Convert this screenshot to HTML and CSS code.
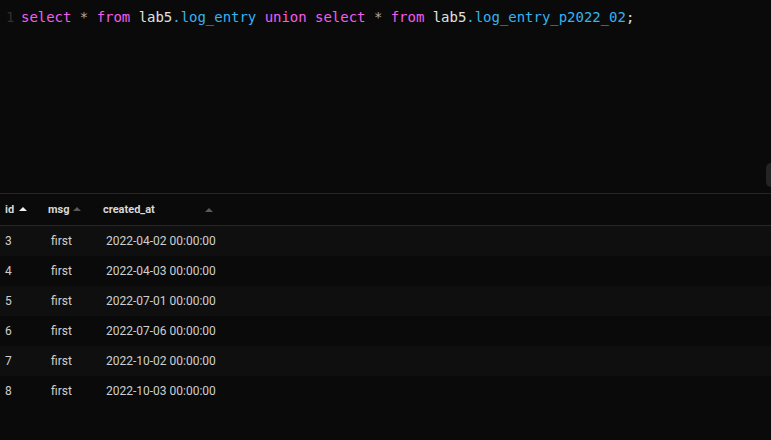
FILE: index.html
```html
<!DOCTYPE html>
<html>
<head>
<meta charset="utf-8">
<link rel="stylesheet" href="styles.css">
</head>
<body>
<div class="app">
  <div class="editor">
    <div class="line">
      <span class="ln">1</span>
      <span class="code"><span class="kw">select</span> <span class="op">*</span> <span class="kw">from</span> <span class="id">lab5</span><span class="tb">.log_entry</span> <span class="kw">union</span> <span class="kw">select</span> <span class="op">*</span> <span class="kw">from</span> <span class="id">lab5</span><span class="tb">.log_entry_p2022_02</span><span class="id">;</span></span>
    </div>
    <div class="thumb"></div>
  </div>
  <div class="grid">
    <div class="row head">
      <div class="c c1">id <span class="arrow active"></span></div>
      <div class="c c2">msg <span class="arrow"></span></div>
      <div class="c c3"><span>created_at</span><span class="arrow"></span></div>
    </div>
    <div class="row odd"><div class="c c1">3</div><div class="c c2">first</div><div class="c c3">2022-04-02 00:00:00</div></div>
    <div class="row"><div class="c c1">4</div><div class="c c2">first</div><div class="c c3">2022-04-03 00:00:00</div></div>
    <div class="row odd"><div class="c c1">5</div><div class="c c2">first</div><div class="c c3">2022-07-01 00:00:00</div></div>
    <div class="row"><div class="c c1">6</div><div class="c c2">first</div><div class="c c3">2022-07-06 00:00:00</div></div>
    <div class="row odd"><div class="c c1">7</div><div class="c c2">first</div><div class="c c3">2022-10-02 00:00:00</div></div>
    <div class="row"><div class="c c1">8</div><div class="c c2">first</div><div class="c c3">2022-10-03 00:00:00</div></div>
  </div>
</div>
</body>
</html>
```
FILE: styles.css
```css
html, body {
  margin: 0;
  padding: 0;
  background: #0a0a0a;
}
.app {
  width: 771px;
  height: 440px;
  overflow: hidden;
  display: flex;
  flex-direction: column;
}
.editor {
  position: relative;
  height: 193px;
  border-bottom: 1px solid #262626;
  box-sizing: content-box;
}
.line {
  display: flex;
  align-items: baseline;
  padding-top: 8px;
  font-family: "DejaVu Sans Mono", monospace;
  font-size: 14px;
  line-height: 19px;
  white-space: pre;
}
.ln {
  width: 21px;
  padding-left: 6px;
  box-sizing: border-box;
  color: #303030;
}
.code { letter-spacing: -0.03px; }
.kw { color: #f25cf0; }
.op { color: #a8a8a8; }
.id { color: #e0e0e0; }
.tb { color: #34b3ef; }
.thumb {
  position: absolute;
  right: 0;
  top: 163px;
  width: 5px;
  height: 24px;
  border-radius: 5px 0 0 5px;
  background: #242424;
}
.grid {
  font-family: Roboto, "Liberation Sans", sans-serif;
}
.row {
  display: flex;
  height: 30px;
  align-items: center;
  font-size: 12px;
  color: #cfcfcf;
}
.row.odd { background: #0f0f0f; }
.row.head {
  height: 31px;
  border-bottom: 1px solid #262626;
  font-size: 11px;
  font-weight: 700;
  color: #d8d8d8;
}
.c { box-sizing: border-box; }
.c1 { width: 43px; padding-left: 5px; }
.c2 { width: 55px; padding-left: 8px; }
.c3 { width: 125px; padding-left: 8px; }
.head .c1 { padding-left: 5px; }
.head .c2 { padding-left: 5px; }
.head .c3 { padding-left: 5px; display: flex; justify-content: space-between; align-items: center; padding-right: 10px; }
.arrow {
  display: inline-block;
  width: 0;
  height: 0;
  border-left: 4px solid transparent;
  border-right: 4px solid transparent;
  border-bottom: 4px solid #5a5a5a;
  margin-left: 1px;
  vertical-align: 2px;
}
.arrow.active { border-bottom-color: #f0f0f0; margin-left: 2px; }
```
